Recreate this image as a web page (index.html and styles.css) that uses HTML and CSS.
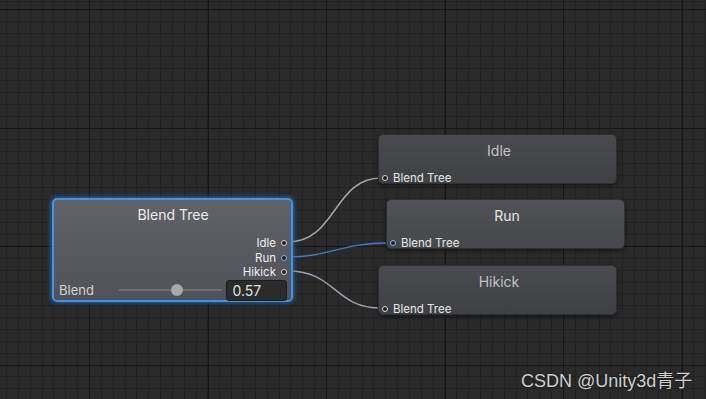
FILE: index.html
```html
<!DOCTYPE html>
<html>
<head>
    <meta charset="UTF-8">
    <title>Animator - Blend Tree</title>
    <link rel="stylesheet" href="styles.css">
</head>
<body>
    <div class="graph">
        <svg class="wires" width="706" height="399" viewBox="0 0 706 399">
            <path class="wire" d="M288 242 C336 242 334 178 381 178"/>
            <path class="wire wire-active" d="M288 257 C330 257 340 243 389 243"/>
            <path class="wire wire-soft" d="M288 271 C336 271 334 308 381 308"/>
        </svg>

        <div class="node blend-node">
            <div class="node-title">Blend Tree</div>
            <div class="outputs">
                <div class="out-port">Idle<span class="dot"></span></div>
                <div class="out-port">Run<span class="dot dot-active"></span></div>
                <div class="out-port">Hikick<span class="dot"></span></div>
            </div>
            <div class="param-row">
                <span class="param-label">Blend</span>
                <div class="slider">
                    <div class="slider-track"></div>
                    <div class="slider-thumb"></div>
                </div>
                <div class="param-field">0.57</div>
            </div>
        </div>

        <div class="node motion-node idle-node">
            <div class="node-title">Idle</div>
            <div class="in-port"><span class="dot"></span>Blend Tree</div>
        </div>

        <div class="node motion-node run-node">
            <div class="node-title">Run</div>
            <div class="in-port"><span class="dot dot-active"></span>Blend Tree</div>
        </div>

        <div class="node motion-node hikick-node">
            <div class="node-title">Hikick</div>
            <div class="in-port"><span class="dot"></span>Blend Tree</div>
        </div>

        <div class="watermark">CSDN @Unity3d青子</div>
    </div>
</body>
</html>
```

FILE: styles.css
```css
body {
    margin: 0;
    width: 706px;
    height: 399px;
    overflow: hidden;
    font-family: Inter, "Noto Sans", sans-serif;
    background-color: #2a2a2a;
}

/* canvas grid: major lines every 10 cells */
.graph {
    position: relative;
    width: 706px;
    height: 399px;
    background-color: #2a2a2a;
    background-image:
        repeating-linear-gradient(to right, #161616 0 1px, transparent 1px 118.5px),
        repeating-linear-gradient(to bottom, #161616 0 1px, transparent 1px 118.5px),
        repeating-linear-gradient(to right, #222222 0 1px, transparent 1px 11.85px),
        repeating-linear-gradient(to bottom, #222222 0 1px, transparent 1px 11.85px);
    background-position: 89px 0, 0 9px, 6px 0, 0 9px;
}

.wires {
    position: absolute;
    left: 0;
    top: 0;
}

.wire {
    fill: none;
    stroke: #a9a9a9;
    stroke-width: 1.4;
}

.wire-active {
    stroke: #3f7cc4;
}

.wire-soft {
    stroke: #9aa3ae;
}

.node {
    position: absolute;
    box-sizing: border-box;
    border-radius: 5px;
    display: flex;
    flex-direction: column;
    box-shadow: 0 2px 4px rgba(0,0,0,0.45);
}

.node-title {
    line-height: 20px;
    font-size: 14px;
    text-align: center;
}

.dot {
    display: inline-block;
    box-sizing: border-box;
    width: 6px;
    height: 6px;
    border-radius: 50%;
    border: 1.5px solid #d8d8d8;
    background: #1e1e1e;
}

.dot-active {
    border-color: #8db8ea;
}

/* Blend Tree node */
.blend-node {
    left: 52px;
    top: 198px;
    width: 241px;
    height: 104px;
    padding: 5px 4px 0 5px;
    border: 2px solid #3f93e8;
    background: linear-gradient(#606267, #505257);
    box-shadow: 0 0 4px 1px rgba(50,130,220,0.75), 0 2px 4px rgba(0,0,0,0.4);
}

.blend-node .node-title {
    color: #ececec;
}

.outputs {
    margin-top: 11px;
    display: flex;
    flex-direction: column;
    align-items: flex-end;
}

.out-port {
    height: 14.5px;
    display: flex;
    align-items: center;
    gap: 5px;
    font-size: 11.5px;
    color: #eeeeee;
}

.param-row {
    height: 22px;
    display: flex;
    align-items: center;
}

.param-label {
    width: 61px;
    font-size: 13px;
    color: #d2d2d2;
}

.slider {
    position: relative;
    width: 104px;
    height: 12px;
    display: flex;
    align-items: center;
}

.slider-track {
    flex: 1;
    height: 2px;
    background: #6e7075;
}

.slider-thumb {
    position: absolute;
    left: 52px;
    top: 0;
    width: 12px;
    height: 12px;
    border-radius: 50%;
    background: #a8a8a8;
}

.param-field {
    margin-left: 4px;
    box-sizing: border-box;
    width: 61px;
    height: 21px;
    padding-left: 5px;
    line-height: 20px;
    font-size: 14px;
    color: #e2e2e2;
    background: #2b2b2b;
    border: 1px solid #1d1d1d;
    border-radius: 3px;
}

/* motion nodes */
.motion-node {
    width: 239px;
    height: 50px;
    padding: 6px 0 0 3px;
    background: linear-gradient(#494b4f, #3e4044);
    border: 1px solid #2e3033;
}

.motion-node .node-title {
    color: #c4c4c4;
}

.in-port {
    margin-top: auto;
    height: 10px;
    display: flex;
    align-items: center;
    gap: 5px;
    font-size: 11.5px;
    color: #e6e6e6;
}

.idle-node {
    left: 378px;
    top: 134px;
}

.run-node {
    left: 386px;
    top: 199px;
    background: linear-gradient(#505256, #45474b);
}

.run-node .node-title {
    color: #e8e8e8;
}

.hikick-node {
    left: 378px;
    top: 265px;
}

.watermark {
    position: absolute;
    left: 521px;
    top: 366px;
    font-family: "Liberation Sans", "Noto Sans CJK SC", sans-serif;
    font-size: 18px;
    color: #cfcfcf;
    text-shadow: 0 0 2px rgba(0,0,0,0.6);
}
```
